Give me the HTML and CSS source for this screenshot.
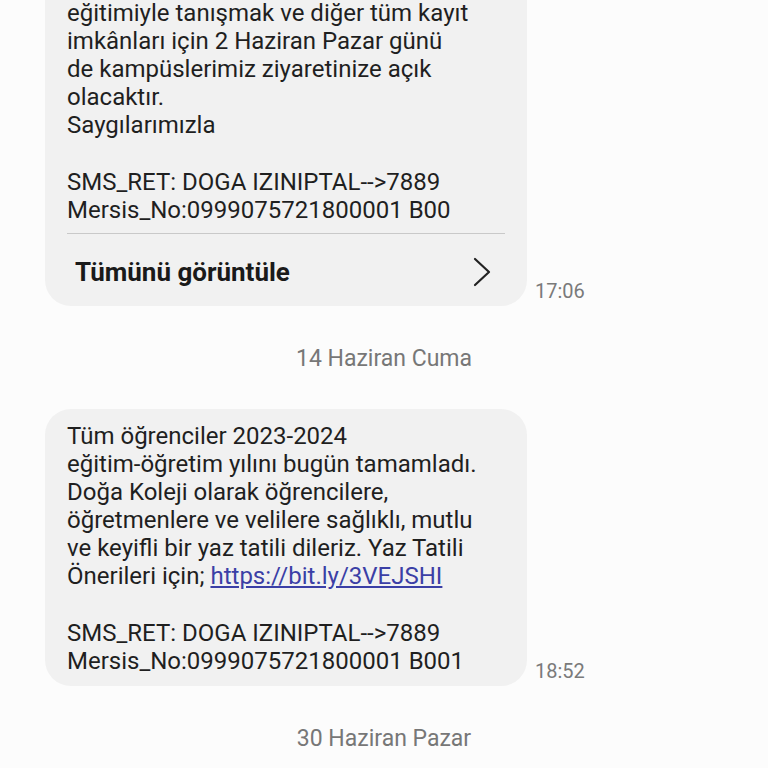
FILE: index.html
```html
<!DOCTYPE html>
<html>

<head>
  <meta name="viewport" content="width=device-width,initial-scale=1">
  <link rel="stylesheet" href="styles.css">
</head>

<body>
  <div class="thread">

    <div class="row">
      <div class="bubble">
        <div class="text">Öğrencilerimizi Doğa Koleji
eğitimiyle tanışmak ve diğer tüm kayıt
imkânları için 2 Haziran Pazar günü
de kampüslerimiz ziyaretinize açık
olacaktır.
Saygılarımızla

SMS_RET: DOGA IZINIPTAL--&gt;7889
Mersis_No:0999075721800001 B00</div>
        <div class="more">
          <span>Tümünü görüntüle</span>
          <svg class="chev" width="20" height="30" viewBox="0 0 20 30">
            <path d="M3 2 L17 15 L3 28" fill="none" stroke="#222" stroke-width="2.2" stroke-linecap="round" stroke-linejoin="round"/>
          </svg>
        </div>
      </div>
      <span class="time">17:06</span>
    </div>

    <div class="date">14 Haziran Cuma</div>

    <div class="row">
      <div class="bubble">
        <div class="text">Tüm öğrenciler 2023-2024
eğitim-öğretim yılını bugün tamamladı.
Doğa Koleji olarak öğrencilere,
öğretmenlere ve velilere sağlıklı, mutlu
ve keyifli bir yaz tatili dileriz. Yaz Tatili
Önerileri için; <a href="#">https://bit.ly/3VEJSHI</a>

SMS_RET: DOGA IZINIPTAL--&gt;7889
Mersis_No:0999075721800001 B001</div>
      </div>
      <span class="time">18:52</span>
    </div>

    <div class="date">30 Haziran Pazar</div>

  </div>
</body>

</html>
```

FILE: styles.css
```css
/* Page */

body {
  margin: 0;
  background-color: #fcfcfc;
  font-family: Roboto, "Noto Sans", sans-serif;
  color: #1f1f1f;
  overflow: hidden;
}

/* Conversation, scrolled a little past the first message's top */

.thread {
  margin-top: -42px;
  padding-left: 45px;
}

.row {
  display: flex;
  align-items: flex-end;
  gap: 8px;
}

.bubble {
  width: 482px;
  box-sizing: border-box;
  background-color: #f1f1f1;
  border-radius: 26px;
  padding: 13px 22px 11px;
}

.text {
  white-space: pre-line;
  font-size: 24px;
  line-height: 28.1px;
}

.text a {
  color: #3b3fa6;
}

/* "view all" footer */

.more {
  display: flex;
  align-items: center;
  justify-content: space-between;
  border-top: 1.5px solid #c9c9c9;
  margin-top: 9px;
  margin-bottom: -11px;
  height: 68px;
  padding: 4px 13px 0 8px;
  font-size: 26px;
  font-weight: 700;
  color: #1a1a1a;
}

.chev {
  display: block;
}

.time {
  font-size: 20px;
  color: #7a7a7a;
  margin-bottom: 3px;
}

/* Day separators */

.date {
  width: 678px;
  text-align: center;
  font-size: 23px;
  line-height: 26px;
  color: #777;
  margin: 40px 0 37px;
}
```
